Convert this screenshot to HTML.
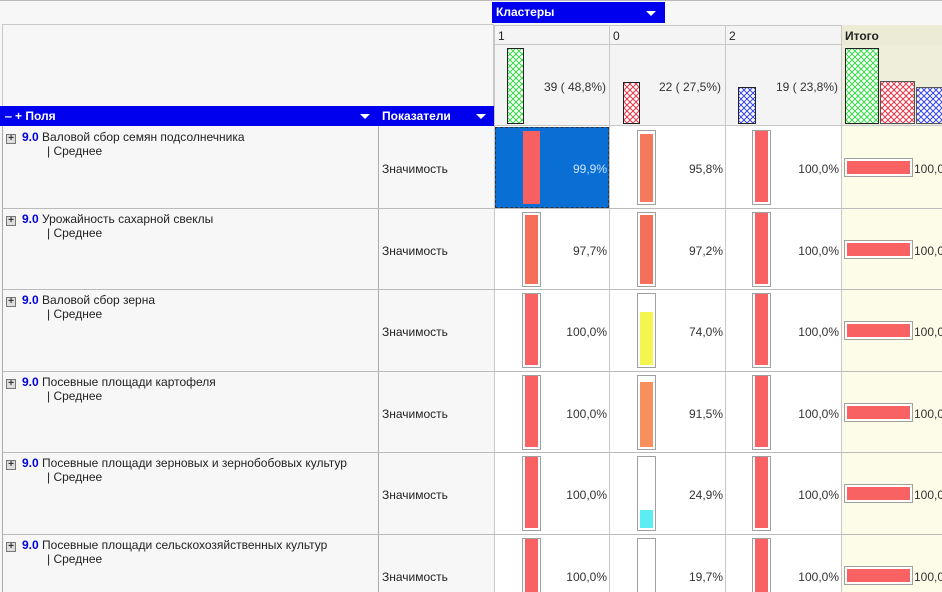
<!DOCTYPE html>
<html style="width:942px;height:592px;overflow:hidden"><head><meta charset="utf-8"><style>
*{margin:0;padding:0;box-sizing:border-box}
body{width:942px;height:592px;overflow:hidden;background:#f7f7f7;font-family:"Liberation Sans","DejaVu Sans",sans-serif;font-size:12px;color:#222}
#w{position:relative;width:942px;height:592px;overflow:hidden}
.a{position:absolute}
.hl{position:absolute;background:#c8c8c8}
.bar{position:absolute;border:1px solid #a0a0a0;background:#fff}
.fill{position:absolute;left:2px;right:2px;bottom:2px}
.pct{position:absolute;text-align:right;font-size:12px;color:#333}
.plus{position:absolute;width:10px;height:10px;border:1px solid #777;background:#ddd;font-size:10px;line-height:8px;text-align:center;font-weight:bold;color:#333}
.tri{display:inline-block;width:0;height:0;border-left:5px solid transparent;border-right:5px solid transparent;border-top:5px solid #fff}
</style></head><body><div id="w">
<div class="a" style="left:0;top:0;width:942px;height:1px;background:#bbb"></div>
<div class="a" style="left:2px;top:24px;width:492px;height:84px;border:1px solid #c8c8c8;background:#f7f7f7"></div>
<div class="a" style="left:492px;top:2px;width:173px;height:21px;background:#0000ee;color:#fff;font-weight:bold;font-size:12px;padding:3px 0 0 4px">Кластеры<span class="tri" style="position:absolute;left:154px;top:9px"></span></div>
<div class="a" style="left:494px;top:25px;width:448px;height:20px;background:#f4f4f4;border-top:1px solid #c8c8c8;border-bottom:1px solid #c8c8c8"></div>
<div class="a" style="left:841px;top:25px;width:101px;height:20px;background:#ecebd6"></div>
<div class="a" style="left:498px;top:29px">1</div>
<div class="a" style="left:613px;top:29px">0</div>
<div class="a" style="left:729px;top:29px">2</div>
<div class="a" style="left:845px;top:29px;font-weight:bold">Итого</div>
<div class="a" style="left:494px;top:45px;width:448px;height:81px;background:#f4f4f4"></div>
<div class="a" style="left:841px;top:45px;width:101px;height:81px;background:#efeedb"></div>
<svg class="a" style="left:0;top:0" width="942" height="130">
<defs>
<pattern id="pg" width="6" height="6" patternUnits="userSpaceOnUse"><rect width="6" height="6" fill="#fff"/><path d="M0 0L6 6M6 0L0 6" stroke="#33dd44" stroke-width="1"/></pattern>
<pattern id="pr" width="6" height="6" patternUnits="userSpaceOnUse"><rect width="6" height="6" fill="#fff"/><path d="M0 0L6 6M6 0L0 6" stroke="#ee3344" stroke-width="1"/></pattern>
<pattern id="pb" width="6" height="6" patternUnits="userSpaceOnUse"><rect width="6" height="6" fill="#fff"/><path d="M0 0L6 6M6 0L0 6" stroke="#3344ee" stroke-width="1"/></pattern>
</defs>
<rect x="507.5" y="48.5" width="16" height="75" fill="url(#pg)" stroke="#222"/>
<rect x="623.5" y="82.5" width="16" height="41" fill="url(#pr)" stroke="#222"/>
<rect x="738.5" y="87.5" width="17" height="36" fill="url(#pb)" stroke="#222"/>
<rect x="845.5" y="48.5" width="33" height="75" fill="url(#pg)" stroke="#222"/>
<rect x="880.5" y="81.5" width="34" height="42" fill="url(#pr)" stroke="#555"/>
<rect x="916.5" y="87.5" width="30" height="36" fill="url(#pb)" stroke="#555"/>
</svg>
<div class="pct" style="left:520px;top:80px;width:86px">39 ( 48,8%)</div>
<div class="pct" style="left:630px;top:80px;width:91px">22 ( 27,5%)</div>
<div class="pct" style="left:745px;top:80px;width:93px">19 ( 23,8%)</div>
<div class="a" style="left:0;top:106px;width:494px;height:20px;background:#0000ee;color:#fff;font-weight:bold;font-size:12px"><span class="a" style="left:5px;top:3px">‒ + Поля</span><span class="tri" style="position:absolute;left:360px;top:8px"></span><span class="a" style="left:382px;top:3px">Показатели</span><span class="tri" style="position:absolute;left:476px;top:8px"></span></div>
<div class="a" style="left:0;top:126px;width:378px;height:466px;background:#f7f7f7"></div>
<div class="a" style="left:378px;top:126px;width:116px;height:466px;background:#f7f7f7"></div>
<div class="a" style="left:494px;top:126px;width:347px;height:466px;background:#fff"></div>
<div class="a" style="left:841px;top:126px;width:101px;height:466px;background:#fdfce8"></div>
<div class="hl" style="left:2px;top:126px;width:1px;height:466px;background:#aaa"></div>
<div class="hl" style="left:378px;top:126px;width:1px;height:466px;background:#aaa"></div>
<div class="hl" style="left:494px;top:25px;width:1px;height:567px"></div>
<div class="hl" style="left:609px;top:25px;width:1px;height:567px"></div>
<div class="hl" style="left:725px;top:25px;width:1px;height:567px"></div>
<div class="hl" style="left:841px;top:25px;width:1px;height:567px"></div>
<div class="hl" style="left:494px;top:125px;width:448px;height:1px"></div>
<div class="hl" style="left:2px;top:208px;width:940px;height:1px;background:#bbb"></div>
<div class="hl" style="left:2px;top:289px;width:940px;height:1px;background:#bbb"></div>
<div class="hl" style="left:2px;top:371px;width:940px;height:1px;background:#bbb"></div>
<div class="hl" style="left:2px;top:452px;width:940px;height:1px;background:#bbb"></div>
<div class="hl" style="left:2px;top:534px;width:940px;height:1px;background:#bbb"></div>
<div class="a" style="left:495px;top:127px;width:114px;height:81px;background:#0a6fd4;border:1px dashed #333"></div>
<div id="rows"></div>
</div>
<script>
var tops=[126,208,289,371,452,534];
var names=["Валовой сбор семян подсолнечника","Урожайность сахарной свеклы","Валовой сбор зерна","Посевные площади картофеля","Посевные площади зерновых и зернобобовых культур","Посевные площади сельскохозяйственных культур"];
var v=[[99.9,95.8,100],[97.7,97.2,100],[100,74.0,100],[100,91.5,100],[100,24.9,100],[100,19.7,100]];
var col={100:"#f96262",99.9:"#f66060",97.7:"#f5705a",97.2:"#f5705a",95.8:"#f57a5c",74:"#f5f550",91.5:"#f7905c",24.9:"#5cecf4",19.7:"#fff"};
var xs=[522,637,752],px=[494,609,725];
var h="";
function f(n){return n.toFixed(1).replace(".",",")+"%"}
for(var i=0;i<6;i++){var t=tops[i];
h+='<div class="plus" style="left:6px;top:'+(t+8)+'px">+</div>';
h+='<div class="a" style="left:22px;top:'+(t+4)+'px;white-space:nowrap"><b style="color:#0000dd">9.0</b> '+names[i]+'</div>';
h+='<div class="a" style="left:47px;top:'+(t+18)+'px">| Среднее</div>';
h+='<div class="a" style="left:382px;top:'+(t+36)+'px">Значимость</div>';
for(var j=0;j<3;j++){var val=v[i][j];var sel=(i==0&&j==0);
var bt=t+4,bh=75;
if(sel){h+='<div class="a" style="left:523px;top:'+(t+5)+'px;width:17px;height:73px;background:#f66060"></div>';}
else{var fh=Math.round((bh-4)*val/100);
h+='<div class="bar" style="left:'+xs[j]+'px;top:'+bt+'px;width:19px;height:'+bh+'px"><div class="fill" style="height:'+fh+'px;background:'+col[val]+'"></div></div>';}
h+='<div class="pct" style="left:'+px[j]+'px;top:'+(t+36)+'px;width:'+(j==0?113:114)+'px;'+(sel?'color:#cfe4ff':'')+'">'+f(val)+'</div>';}
h+='<div class="bar" style="left:844px;top:'+(t+32)+'px;width:69px;height:19px"><div class="fill" style="top:2px;background:#f96262"></div></div>';
h+='<div class="a" style="left:914px;top:'+(t+36)+'px;color:#333">100,0%</div>';}
document.getElementById("rows").innerHTML=h;
</script>
</body></html>
